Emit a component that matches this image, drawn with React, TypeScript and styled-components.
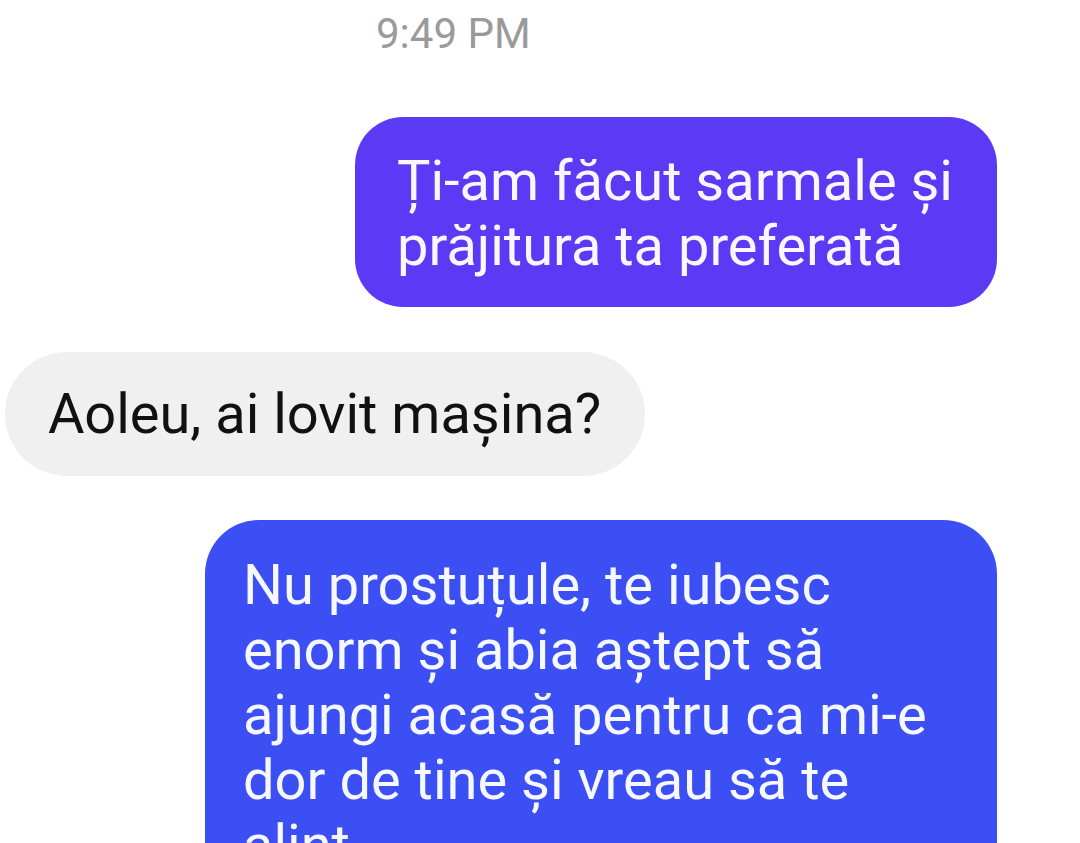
import React from "react";
import styled, { createGlobalStyle } from "styled-components";

const Global = createGlobalStyle`
  html, body { margin: 0; padding: 0; background: #ffffff; }
  body { overflow: hidden; }
  * { box-sizing: border-box; }
`;

const Screen = styled.div`
  width: 1080px;
  height: 843px;
  overflow: hidden;
  background: #ffffff;
  font-family: Roboto, "Noto Sans", sans-serif;
  display: flex;
  flex-direction: column;
  padding-top: 9px;
`;

const Time = styled.div`
  padding-left: 376px;
  font-size: 42px;
  line-height: 50px;
  color: #9a9a9a;
`;

const Row = styled.div<{ $side: "left" | "right"; $gap: number }>`
  display: flex;
  flex-shrink: 0;
  justify-content: ${(p) => (p.$side === "right" ? "flex-end" : "flex-start")};
  padding: 0 83px 0 5px;
  margin-top: ${(p) => p.$gap}px;
`;

const Bubble = styled.div<{ $bg: string; $fg: string; $radius: number; $pad: string; $width?: number }>`
  background: ${(p) => p.$bg};
  color: ${(p) => p.$fg};
  border-radius: ${(p) => p.$radius}px;
  padding: ${(p) => p.$pad};
  ${(p) => (p.$width ? `width: ${p.$width}px;` : "")}
  font-size: 56px;
  line-height: 65px;
  white-space: nowrap;
`;

export default function App() {
  return (
    <>
      <Global />
      <Screen>
        <Time>9:49 PM</Time>
        <Row $side="right" $gap={58}>
          <Bubble $bg="#5a3af5" $fg="#f8f6ff" $radius={48} $pad="32px 44px 28px 42px">
            Ți-am făcut sarmale și
            <br />
            prăjitura ta preferată
          </Bubble>
        </Row>
        <Row $side="left" $gap={45}>
          <Bubble $bg="#f0f0f0" $fg="#111111" $radius={62} $pad="30px 44px 29px 43px">
            Aoleu, ai lovit mașina?
          </Bubble>
        </Row>
        <Row $side="right" $gap={44}>
          <Bubble $bg="#3c4ff5" $fg="#f6f8ff" $radius={54} $pad="33px 40px 40px 38px" $width={792}>
            Nu prostuțule, te iubesc
            <br />
            enorm și abia aștept să
            <br />
            ajungi acasă pentru ca mi-e
            <br />
            dor de tine și vreau să te
            <br />
            alint
          </Bubble>
        </Row>
      </Screen>
    </>
  );
}
